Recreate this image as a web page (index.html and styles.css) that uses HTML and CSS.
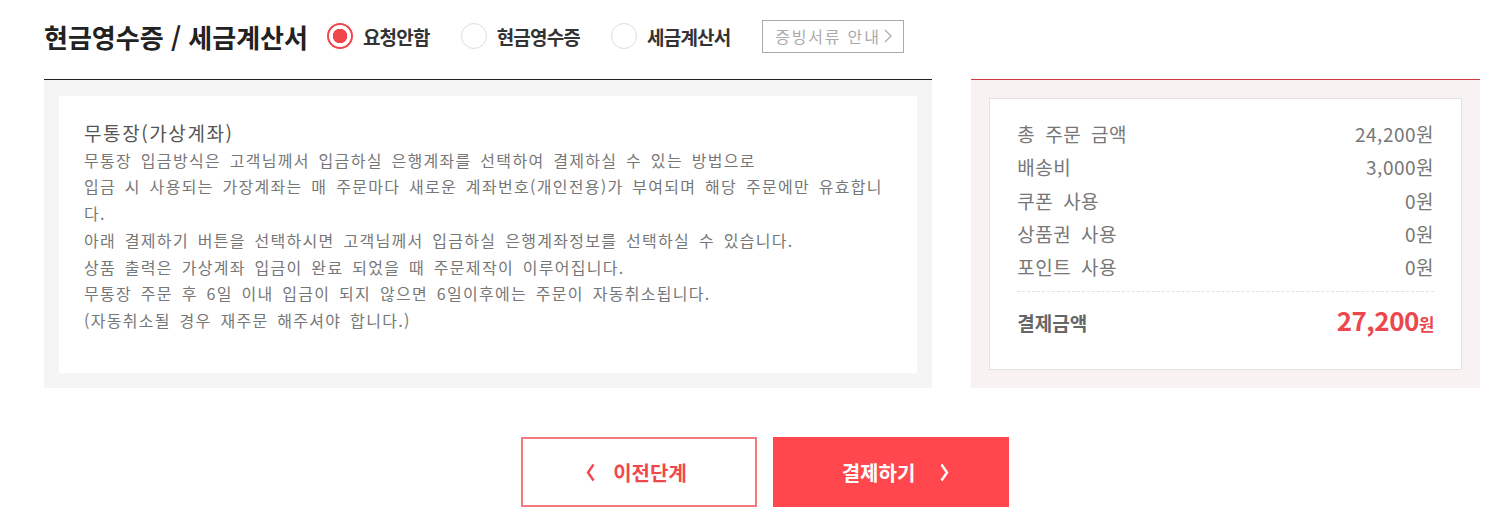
FILE: index.html
```html
<!DOCTYPE html>
<html lang="ko">
  <head>
    <meta charset="UTF-8" />
    <title>결제</title>
    <link rel="stylesheet" href="styles.css">
  </head>
  <body>
    <div class="page">
      <div class="receipt-row">
        <h2 class="receipt-title">현금영수증 / 세금계산서</h2>
        <label class="radio checked"><span class="dot"></span>요청안함</label>
        <label class="radio"><span class="dot"></span>현금영수증</label>
        <label class="radio"><span class="dot"></span>세금계산서</label>
        <a class="guide-btn" href="#">증빙서류 안내
          <svg class="gt" width="8" height="14" viewBox="0 0 8 14"><polyline points="1,1 7,7 1,13" fill="none" stroke="#aaa" stroke-width="1.2"/></svg>
        </a>
      </div>

      <div class="panels">
        <div class="pay-info">
          <div class="pay-info-box">
            <p class="pay-title">무통장(가상계좌)</p>
            <p>무통장 입금방식은 고객님께서 입금하실 은행계좌를 선택하여 결제하실 수 있는 방법으로</p>
            <p>입금 시 사용되는 가장계좌는 매 주문마다 새로운 계좌번호(개인전용)가 부여되며 해당 주문에만 유효합니<br>다.</p>
            <p>아래 결제하기 버튼을 선택하시면 고객님께서 입금하실 은행계좌정보를 선택하실 수 있습니다.</p>
            <p>상품 출력은 가상계좌 입금이 완료 되었을 때 주문제작이 이루어집니다.</p>
            <p>무통장 주문 후 6일 이내 입금이 되지 않으면 6일이후에는 주문이 자동취소됩니다.</p>
            <p>(자동취소될 경우 재주문 해주셔야 합니다.)</p>
          </div>
        </div>

        <div class="summary">
          <div class="summary-box">
            <div class="sum-row"><span>총 주문 금액</span><span>24,200원</span></div>
            <div class="sum-row"><span>배송비</span><span>3,000원</span></div>
            <div class="sum-row"><span>쿠폰 사용</span><span>0원</span></div>
            <div class="sum-row"><span>상품권 사용</span><span>0원</span></div>
            <div class="sum-row"><span>포인트 사용</span><span>0원</span></div>
            <div class="sum-total">
              <span class="total-label">결제금액</span>
              <span class="total-price">27,200<small>원</small></span>
            </div>
          </div>
        </div>
      </div>

      <div class="buttons">
        <a class="btn btn-prev" href="#">
          <svg class="arrow" width="9" height="19" viewBox="0 0 9 19"><polyline points="7.5,1.5 2,9.5 7.5,17.5" fill="none" stroke="#f0484d" stroke-width="2.4"/></svg>
          이전단계
        </a>
        <a class="btn btn-pay" href="#">
          결제하기
          <svg class="arrow" width="9" height="19" viewBox="0 0 9 19"><polyline points="1.5,1.5 7,9.5 1.5,17.5" fill="none" stroke="#fff" stroke-width="2.4"/></svg>
        </a>
      </div>
    </div>
  </body>
</html>
```

FILE: styles.css
```css
body {
  margin: 0;
  background: #fff;
  font-family: "Noto Sans CJK KR", "Noto Sans", sans-serif;
}
.page {
  width: 1436px;
  padding-left: 44px;
}

/* receipt options */
.receipt-row {
  display: flex;
  align-items: center;
  height: 72px;
}
.receipt-title {
  margin: 0 19px 0 0;
  font-size: 26px;
  font-weight: 700;
  color: #222;
  letter-spacing: 0;
}
.radio {
  display: flex;
  align-items: center;
  margin-right: 31px;
  font-size: 19px;
  font-weight: 700;
  color: #333;
  letter-spacing: -0.8px;
}
.dot {
  box-sizing: border-box;
  width: 26px;
  height: 26px;
  margin-right: 10px;
  border: 1px solid #ddd;
  border-radius: 50%;
  background: #fff;
}
.radio.checked .dot {
  border: 2px solid #f0464c;
  background: radial-gradient(circle, #f0464c 0, #f0464c 7px, #fff 7.5px);
}
.guide-btn {
  display: flex;
  align-items: center;
  justify-content: center;
  box-sizing: border-box;
  width: 142px;
  height: 33px;
  margin-left: 1px;
  border: 1px solid #aaa;
  color: #aaa;
  font-size: 16px;
  text-decoration: none;
  letter-spacing: 1.8px;
}
.guide-btn .gt {
  margin-left: 3px;
}

/* panels */
.panels {
  display: flex;
  gap: 39px;
  margin-top: 7px;
}
.pay-info {
  box-sizing: border-box;
  width: 889px;
  height: 309px;
  border-top: 1px solid #222;
  background: #f5f5f5;
  padding: 16px 15px 15px;
}
.pay-info-box {
  height: 100%;
  background: #fff;
  padding: 24px 25px 0;
  box-sizing: border-box;
}
.pay-info-box p {
  margin: 0;
  font-size: 16px;
  line-height: 26.7px;
  color: #777;
  letter-spacing: 1.3px;
  word-spacing: 3px;
}
.pay-info-box .pay-title {
  font-size: 19px;
  color: #555;
  letter-spacing: 1.6px;
  word-spacing: 0;
}

.summary {
  box-sizing: border-box;
  width: 509px;
  height: 309px;
  border-top: 1px solid #cc3b40;
  background: #f8f2f2;
  padding: 18px 18px 18px;
}
.summary-box {
  box-sizing: border-box;
  height: 100%;
  background: #fff;
  border: 1px solid #e3e3e3;
  padding: 18px 27px 0;
}
.sum-row {
  display: flex;
  justify-content: space-between;
  font-size: 19px;
  line-height: 33.3px;
  color: #777;
  letter-spacing: 0.5px;
}
.sum-row span:first-child {
  word-spacing: 4px;
}
.sum-total {
  display: flex;
  justify-content: space-between;
  align-items: baseline;
  margin-top: 8px;
  padding-top: 9px;
  border-top: 1px dashed #e0e0e0;
}
.total-label {
  font-size: 19px;
  font-weight: 700;
  color: #666;
}
.total-price {
  font-size: 26px;
  font-weight: 700;
  color: #ec474d;
  letter-spacing: -0.5px;
}
.total-price small {
  font-size: 17px;
}

/* bottom buttons */
.buttons {
  display: flex;
  justify-content: center;
  gap: 16px;
  margin-top: 49px;
  padding-left: 5px;
}
.btn {
  display: flex;
  align-items: center;
  justify-content: center;
  box-sizing: border-box;
  width: 236px;
  height: 70px;
  font-size: 20px;
  font-weight: 700;
  text-decoration: none;
}
.btn-prev {
  border: 2px solid #f07a7c;
  color: #f0484d;
  padding-right: 4px;
}
.btn-prev .arrow {
  margin-right: 18px;
}
.btn-pay {
  background: #ff474d;
  color: #fff;
  padding-left: 10px;
}
.btn-pay .arrow {
  margin-left: 25px;
}
```
